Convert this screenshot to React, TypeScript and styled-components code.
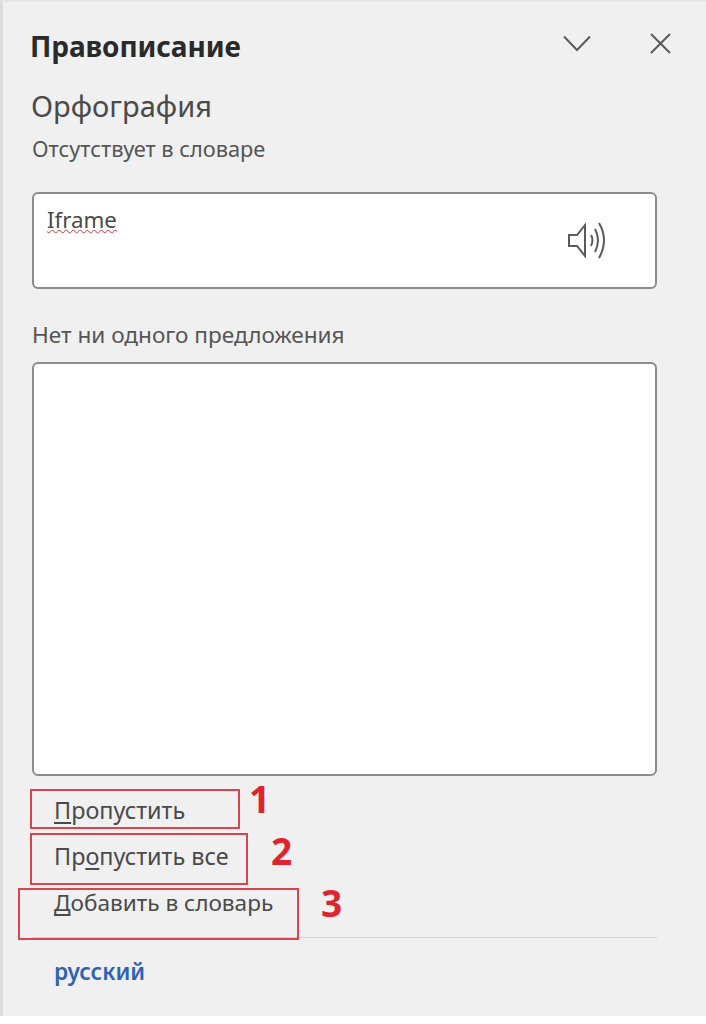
import styled, {createGlobalStyle} from "styled-components";

const GlobalStyle = createGlobalStyle`
  html, body {
    margin: 0;
    padding: 0;
    background: #ffffff;
  }
  body {
    font-family: "Noto Sans", "Open Sans", sans-serif;
    color: #3c3c3c;
  }
`;

const Pane = styled.div`
  position: relative;
  box-sizing: border-box;
  width: 706px;
  height: 1016px;
  padding: 0 50px 0 30px;
  background: #f0f0f0;
  border-left: 3px solid #dcdcdc;
  border-top: 2px solid #e6e6e6;
  overflow: hidden;
`;

const Header = styled.div`
  display: flex;
  align-items: center;
  height: 42px;
  margin-top: 23px;
`;

const Title = styled.h1`
  flex: 1;
  margin: 0 0 0 -3px;
  font-size: 28px;
  line-height: 42px;
  font-weight: 700;
  letter-spacing: -0.1px;
  color: #2a2a2a;
`;

const HeaderButtons = styled.div`
  display: flex;
  align-items: center;
  gap: 59px;
  margin: -6px -15px 0 0;
  color: #5a5a5a;
`;

const Heading = styled.h2`
  margin: 21px 0 0 -2px;
  font-size: 29px;
  line-height: 36px;
  font-weight: 400;
  color: #4a4a4a;
`;

const Caption = styled.div`
  margin-top: ${props => props.$top}px;
  margin-left: -1px;
  font-size: ${props => props.$size}px;
  line-height: 28px;
  color: #555555;
`;

const WordBox = styled.div`
  box-sizing: border-box;
  display: flex;
  justify-content: space-between;
  width: 625px;
  height: 97px;
  margin: 29px 0 0 -1px;
  padding: 11px 49px 0 13px;
  background: #ffffff;
  border: 2px solid #8c8c8c;
  border-radius: 6px;
`;

const Word = styled.span`
  font-size: 22.3px;
  line-height: 30px;
  height: 30px;
  color: #4a4a4a;
  text-decoration: underline wavy #d8343c 1px;
  text-underline-offset: 1px;
`;

const SpeakerIcon = styled.svg`
  margin-top: 17px;
  color: #5a5a5a;
`;

const SuggestBox = styled.div`
  box-sizing: border-box;
  width: 625px;
  height: 414px;
  margin: 13px 0 0 -1px;
  background: #ffffff;
  border: 2px solid #8c8c8c;
  border-radius: 6px;
`;

const Actions = styled.div`
  display: flex;
  flex-direction: column;
  gap: 17px;
  margin: 20px 0 0 21px;
`;

const Action = styled.div`
  font-size: ${props => props.$size}px;
  line-height: 29px;
  color: #4a4a4a;
  u {
    text-underline-offset: 3px;
    text-decoration-thickness: 2px;
    text-decoration-skip-ink: none;
  }
`;

const Divider = styled.div`
  width: 625px;
  height: 1px;
  margin: 20px 0 0 -1px;
  background: #d2d2d2;
`;

const Language = styled.div`
  margin: 20px 0 0 21px;
  font-size: 22.7px;
  line-height: 28px;
  font-weight: 600;
  color: #2d62b4;
`;

const Mark = styled.div`
  position: absolute;
  box-sizing: border-box;
  left: ${props => props.$x}px;
  top: ${props => props.$y}px;
  width: ${props => props.$w}px;
  height: ${props => props.$h}px;
  border: 2px solid #d9454f;
`;

const MarkNumber = styled.div`
  position: absolute;
  left: ${props => props.$x}px;
  top: ${props => props.$y}px;
  font-family: "Open Sans", "Noto Sans", sans-serif;
  font-size: 37px;
  line-height: 40px;
  font-weight: 700;
  color: #df2430;
`;

export default function App() {
  return (
    <>
      <GlobalStyle />
      <Pane>
        <Header>
          <Title>Правописание</Title>
          <HeaderButtons>
            <svg width="28" height="17" viewBox="0 0 28 17" fill="none" stroke="currentColor" strokeWidth="2">
              <path d="M1 1.5 L14 15 L27 1.5" />
            </svg>
            <svg width="21" height="21" viewBox="0 0 21 21" fill="none" stroke="currentColor" strokeWidth="2">
              <path d="M1 1 L20 20 M20 1 L1 20" />
            </svg>
          </HeaderButtons>
        </Header>
        <Heading>Орфография</Heading>
        <Caption $top={11} $size={21.8}>Отсутствует в словаре</Caption>
        <WordBox>
          <Word>Iframe</Word>
          <SpeakerIcon width="38" height="37" viewBox="0 0 38 37" fill="none" stroke="currentColor" strokeWidth="2">
            <path d="M1 13 H9 L17 3 V34 L9 24 H1 Z" />
            <path d="M23 13 Q26 18 23 24" />
            <path d="M27 7 Q33 18 27 30" />
            <path d="M31 1 Q41 18 31 36" />
          </SpeakerIcon>
        </WordBox>
        <Caption $top={32} $size={22.6}>Нет ни одного предложения</Caption>
        <SuggestBox />
        <Actions>
          <Action $size={23.4}><u>П</u>ропустить</Action>
          <Action $size={23.4}>Пр<u>о</u>пустить все</Action>
          <Action $size={22.6}><u>Д</u>обавить в словарь</Action>
        </Actions>
        <Divider />
        <Language>русский</Language>
        <Mark $x={27} $y={787} $w={210} $h={40} />
        <Mark $x={27} $y={831} $w={218} $h={52} />
        <Mark $x={15} $y={886} $w={281} $h={52} />
        <MarkNumber $x={246} $y={777}>1</MarkNumber>
        <MarkNumber $x={268} $y={829}>2</MarkNumber>
        <MarkNumber $x={318} $y={881}>3</MarkNumber>
      </Pane>
    </>
  );
}
